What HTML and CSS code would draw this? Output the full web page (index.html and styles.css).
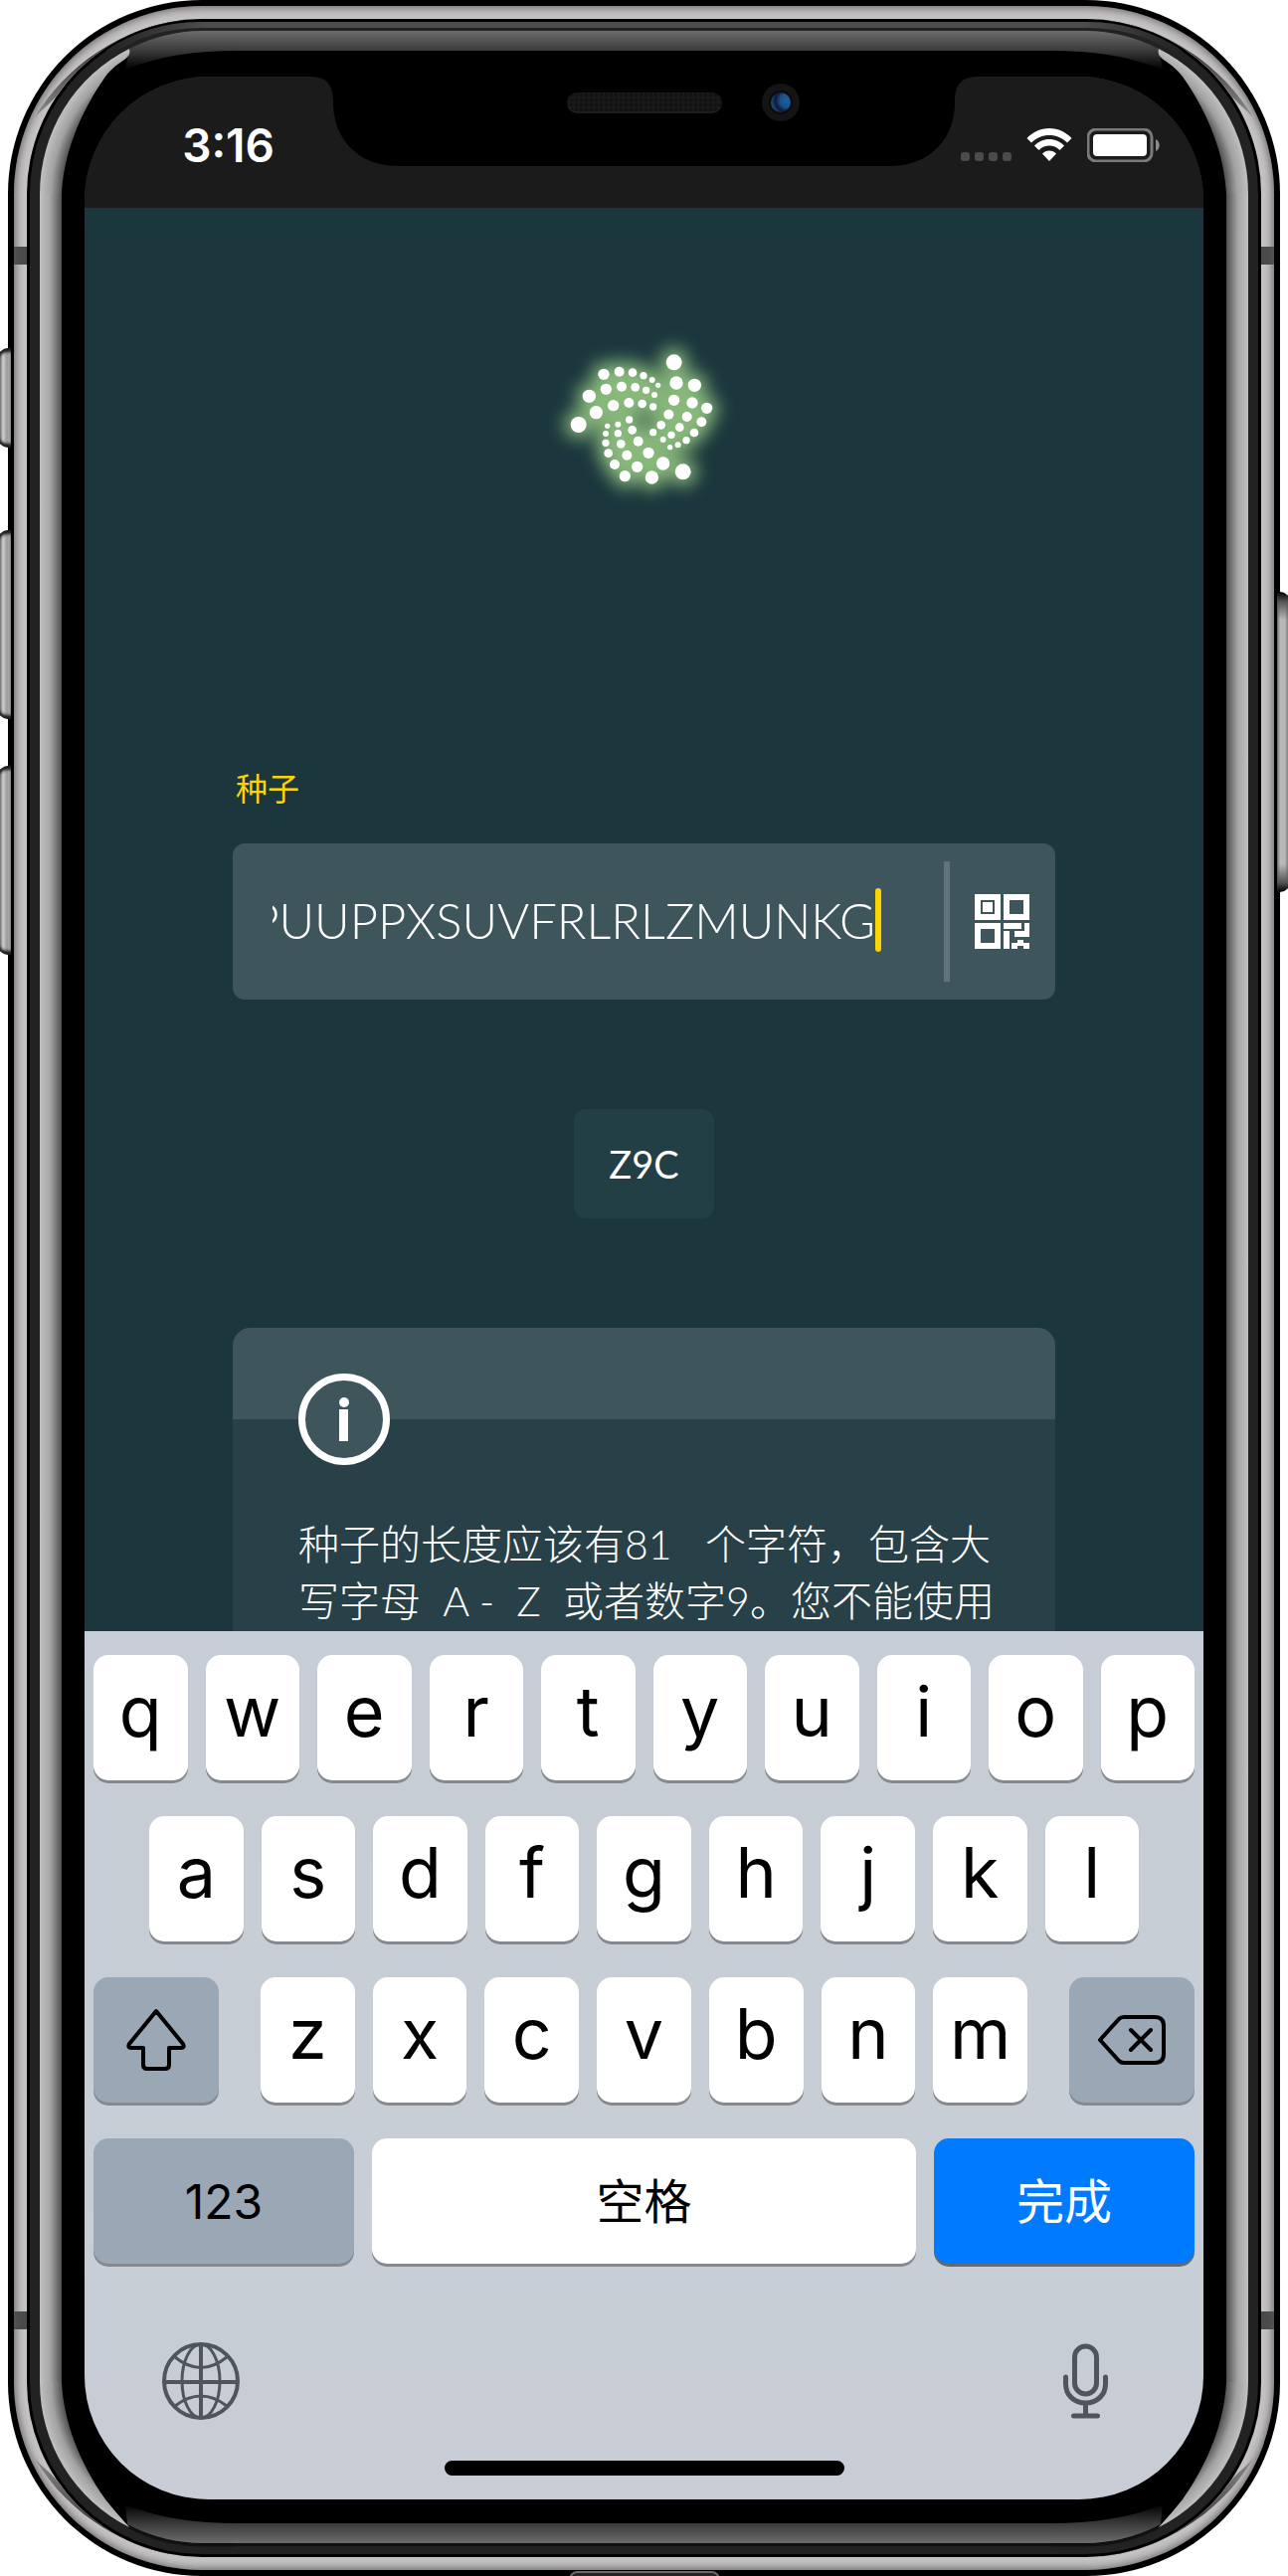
FILE: index.html
```
<!DOCTYPE html>
<html lang="zh-CN">
<head>
<meta charset="utf-8">
<meta name="viewport" content="width=device-width, initial-scale=1">
<title>种子</title>
<link rel="stylesheet" href="styles.css">
</head>
<body>
<svg class="defs" aria-hidden="true">
  <defs>
    <radialGradient id="side-shine" gradientUnits="userSpaceOnUse" cx="195" cy="195" r="163">
      <stop offset="0.86" stop-color="#505050"/>
      <stop offset="0.93" stop-color="#a2a2a2"/>
      <stop offset="1" stop-color="#c0c0c0"/>
    </radialGradient>
    <linearGradient id="side-fade" gradientUnits="userSpaceOnUse" x1="32" y1="0" x2="54" y2="0">
      <stop offset="0" stop-color="#c0c0c0"/>
      <stop offset="0.45" stop-color="#a8a8a8"/>
      <stop offset="1" stop-color="#505050"/>
    </linearGradient>
    <linearGradient id="top-fade" gradientUnits="userSpaceOnUse" x1="0" y1="31" x2="0" y2="70">
      <stop offset="0" stop-color="#6c6c6c"/>
      <stop offset="0.51" stop-color="#3a3a3a"/>
      <stop offset="1" stop-color="#000"/>
    </linearGradient>
    <linearGradient id="bottom-fade" gradientUnits="userSpaceOnUse" x1="0" y1="33" x2="0" y2="72">
      <stop offset="0" stop-color="#6c6c6c"/>
      <stop offset="0.51" stop-color="#3a3a3a"/>
      <stop offset="1" stop-color="#000"/>
    </linearGradient>
    <linearGradient id="lip-fade" gradientUnits="userSpaceOnUse" x1="100" y1="0" x2="200" y2="0">
      <stop offset="0" stop-color="#222"/>
      <stop offset="1" stop-color="#4d4d4d"/>
    </linearGradient>
    <linearGradient id="crescent" gradientUnits="userSpaceOnUse" x1="27" y1="118" x2="170" y2="20">
      <stop offset="0" stop-color="#8a8888"/>
      <stop offset="0.5" stop-color="#3c3c3c"/>
      <stop offset="1" stop-color="#222"/>
    </linearGradient>
    <symbol id="corner" viewBox="0 0 230 230">
      <path d="M180 20C114 27 58 66 27 118C36 108 44 103 50 95A176 176 0 0 1 180 20Z" fill="url(#crescent)"/>
      <path d="M22 230V195A173 173 0 0 1 195 22H230V230Z" fill="#222"/>
      <path d="M32 230V195A163 163 0 0 1 195 32H230V230Z" fill="#000"/>
      <path d="M100 53A171 171 0 0 1 195 25H230" fill="none" stroke="url(#lip-fade)" stroke-width="6"/>
      <path d="M122 49A164 164 0 0 1 195 31H230V51C190 51 152 56 118 70Z" fill="url(#top-fade)"/>
      <path d="M54 230V195C56 155 72 114 98 77C112 59 125 60 122 49A163 163 0 0 0 32 195V230Z" fill="url(#side-shine)"/>
      <path d="M32 195H54V230H32Z" fill="url(#side-fade)"/>
    </symbol>
    <symbol id="corner-low" viewBox="0 0 230 230">
      <path d="M180 20C114 27 58 66 27 118C36 108 44 103 50 95A176 176 0 0 1 180 20Z" fill="url(#crescent)"/>
      <path d="M22 230V195A173 173 0 0 1 195 22H230V230Z" fill="#222"/>
      <path d="M32 230V195A163 163 0 0 1 195 32H230V230Z" fill="#000"/>
      <path d="M122 49A163 163 0 0 1 195 31H230" fill="none" stroke="#111" stroke-width="3"/>
      <path d="M120 52A162 162 0 0 1 195 33H230V53C190 53 152 58 118 72Z" fill="url(#bottom-fade)"/>
      <path d="M54 230V195C56 155 72 114 98 77C110 62 118 54 122 49A163 163 0 0 0 32 195V230Z" fill="url(#side-shine)"/>
      <path d="M32 195H54V230H32Z" fill="url(#side-fade)"/>
    </symbol>
    <filter id="glow" x="-30%" y="-30%" width="160%" height="160%">
      <feGaussianBlur stdDeviation="25"/>
    </filter>
    <g id="dots">
      <circle cx="199" cy="139" r="17"/><circle cx="246" cy="131" r="15"/><circle cx="286" cy="134" r="13"/><circle cx="319" cy="143" r="11"/><circle cx="345" cy="156" r="9"/><circle cx="363" cy="172" r="8"/>
      <circle cx="155" cy="205" r="20"/><circle cx="206" cy="184" r="17"/><circle cx="253" cy="176" r="15"/><circle cx="294" cy="178" r="13"/><circle cx="327" cy="187" r="11"/><circle cx="352" cy="201" r="9"/>
      <circle cx="123" cy="291" r="24"/><circle cx="176" cy="254" r="20"/><circle cx="228" cy="233" r="17"/><circle cx="275" cy="225" r="15"/><circle cx="315" cy="228" r="13"/><circle cx="348" cy="237" r="11"/>
      <circle cx="411" cy="103" r="24"/><circle cx="418" cy="165" r="20"/><circle cx="473" cy="172" r="20"/><circle cx="411" cy="217" r="17"/><circle cx="466" cy="225" r="17"/><circle cx="510" cy="241" r="17"/>
      <circle cx="395" cy="260" r="15"/><circle cx="450" cy="267" r="15"/><circle cx="494" cy="283" r="15"/><circle cx="372" cy="292" r="13"/><circle cx="428" cy="299" r="13"/><circle cx="472" cy="315" r="13"/>
      <circle cx="348" cy="314" r="11"/><circle cx="403" cy="322" r="11"/><circle cx="448" cy="338" r="11"/><circle cx="378" cy="336" r="9"/><circle cx="423" cy="352" r="9"/><circle cx="399" cy="359" r="8"/>
      <circle cx="276" cy="276" r="11"/><circle cx="242" cy="290" r="9"/><circle cx="210" cy="295" r="8"/><circle cx="285" cy="307" r="13"/><circle cx="242" cy="317" r="11"/><circle cx="205" cy="318" r="9"/>
      <circle cx="303" cy="341" r="15"/><circle cx="251" cy="349" r="13"/><circle cx="205" cy="346" r="11"/><circle cx="334" cy="376" r="17"/><circle cx="269" cy="383" r="15"/><circle cx="213" cy="377" r="13"/>
      <circle cx="378" cy="408" r="20"/><circle cx="300" cy="418" r="17"/><circle cx="232" cy="411" r="15"/><circle cx="438" cy="433" r="24"/><circle cx="344" cy="450" r="20"/><circle cx="263" cy="446" r="17"/>
    </g>
  </defs>
</svg>

<div class="device">
  <span class="side-button mute"></span>
  <span class="side-button volume-up"></span>
  <span class="side-button volume-down"></span>
  <span class="side-button power"></span>
  <div class="shell">
    <div class="rim">
      <div class="gap">
        <div class="bezel">
          <svg class="corner top-left" aria-hidden="true"><use href="#corner"/></svg>
          <svg class="corner top-right" aria-hidden="true"><use href="#corner"/></svg>
          <svg class="corner bottom-left" aria-hidden="true"><use href="#corner-low"/></svg>
          <svg class="corner bottom-right" aria-hidden="true"><use href="#corner-low"/></svg>
          <div class="screen">
            <header class="status">
              <time class="clock">3:16</time>
              <svg class="notch" viewBox="0 0 673 90" aria-hidden="true">
                <defs>
                  <pattern id="mesh" width="5" height="5" patternUnits="userSpaceOnUse">
                    <rect width="5" height="5" fill="#121212"/><path d="M0 1H5M1 0V5" stroke="#1e1e1e"/>
                  </pattern>
                  <radialGradient id="lens" cx="0.8" cy="0.4" r="0.95">
                    <stop offset="0" stop-color="#1f5f9e"/><stop offset="0.35" stop-color="#1a5088"/>
                    <stop offset="0.6" stop-color="#0c1a35"/><stop offset="1" stop-color="#3673a8"/>
                  </radialGradient>
                </defs>
                <path d="M0 0C17 0 24 7 24 26C24 62 48 90 90 90H583C625 90 649 62 649 26C649 7 656 0 673 0Z"/>
                <rect x="259" y="16" width="156" height="21" rx="10" fill="url(#mesh)"/>
                <path d="M261 31Q264 36 270 36H404Q410 36 413 31" fill="none" stroke="#222"/>
                <circle cx="474" cy="26" r="19" fill="#141414"/>
                <circle cx="474" cy="26" r="12" fill="#0a0a0c"/>
                <circle cx="474" cy="26" r="10" fill="url(#lens)"/>
              </svg>
              <div class="indicators">
                <svg width="51" height="34" viewBox="0 0 51 34" aria-hidden="true">
                  <g fill="#4b4b4b"><rect y="24" width="9" height="9" rx="3"/><rect x="14" y="24" width="9" height="9" rx="3"/><rect x="28" y="24" width="9" height="9" rx="3"/><rect x="42" y="24" width="9" height="9" rx="3"/></g>
                </svg>
                <svg width="46" height="34" viewBox="0 0 46 34" aria-hidden="true">
                  <g fill="#fff"><path d="M23 0C32 0 40 4 45.500 10L41 14.500C36 9.500 30 7 23 7S10 9.500 5 14.500L0.500 10C6 4 14 0 23 0Z"/><path d="M23 11C29 11 34 13.500 38 17.500L33.500 22C30.500 19 27 17.600 23 17.600S15.500 19 12.500 22L8 17.500C12 13.500 17 11 23 11Z"/><path d="M23 22.500C26 22.500 28 23.500 30 25.500L23 33L16 25.500C18 23.500 20 22.500 23 22.500Z"/></g>
                </svg>
                <svg width="73" height="34" viewBox="0 0 73 34" aria-hidden="true">
                  <rect x="1" y="1" width="64" height="32" rx="8" fill="none" stroke="#7a7a7a" stroke-width="3"/><rect x="6" y="6" width="54" height="22" rx="4" fill="#fff"/><path d="M69 11C74 13 74 21 69 23Z" fill="#8a8a8a"/>
                </svg>
              </div>
            </header>

            <main class="app">
              <svg class="logo" viewBox="7 0 630 540" role="img" aria-label="IOTA">
                <g filter="url(#glow)" opacity="0.95"><use href="#dots" fill="#8fc07f" stroke="#8fc07f" stroke-width="36"/></g>
                <use href="#dots" fill="#fff"/>
              </svg>
              <label class="label" for="seed">种子</label>
              <div class="field">
                <div class="value">
                  <input class="seed" id="seed" type="text" dir="rtl" value="PUUPPXSUVFRLRLZMUNKG">
                  <span class="caret"></span>
                </div>
                <button class="scan" type="button" aria-label="QR">
                  <svg width="55" height="55" viewBox="0 0 55 55" fill="#fff" aria-hidden="true">
                    <path fill-rule="evenodd" d="M0 0H26V26H0ZM6 6V20H20V6Z"/><rect x="8" y="8" width="10" height="10"/>
                    <path fill-rule="evenodd" d="M29 0H55V26H29ZM35 6V20H49V6Z"/>
                    <path fill-rule="evenodd" d="M0 29H26V55H0ZM6 35V49H20V35Z"/>
                    <path d="M29 29H47V35H29ZM50 29H55V43H40V37H50ZM29 37H35V55H29ZM37 49H43V46H49V49H55V55H49V52H43V55H37Z"/>
                  </svg>
                </button>
              </div>
              <output class="checksum" for="seed">Z9C</output>
              <section class="card">
                <div class="card-head">
                  <svg class="info" width="92" height="92" viewBox="0 0 92 92" aria-hidden="true">
                    <circle cx="46" cy="46" r="42.500" fill="#3d555b" stroke="#fff" stroke-width="7"/><circle cx="46" cy="29" r="5" fill="#fff"/><path d="M41 36H50V68H41Z" fill="#fff"/>
                  </svg>
                </div>
                <p class="card-text">种子的长度应该有81&nbsp;&nbsp; 个字符，包含大<br>写字母&nbsp; A - &nbsp;Z&nbsp; 或者数字9。您不能使用</p>
              </section>
            </main>

            <section class="keyboard">
              <div class="row">
                <button class="key">q</button><button class="key">w</button><button class="key">e</button><button class="key">r</button><button class="key">t</button><button class="key">y</button><button class="key">u</button><button class="key">i</button><button class="key">o</button><button class="key">p</button>
              </div>
              <div class="row inset">
                <button class="key">a</button><button class="key">s</button><button class="key">d</button><button class="key">f</button><button class="key">g</button><button class="key">h</button><button class="key">j</button><button class="key">k</button><button class="key">l</button>
              </div>
              <div class="row spread">
                <button class="key dark modifier" aria-label="Shift">
                  <svg width="60" height="64" viewBox="0 0 60 64" fill="none" stroke="#000" stroke-width="4" stroke-linejoin="round" aria-hidden="true"><path d="M30 3L57 36Q59 40 55 40H43V57Q43 61 39 61H21Q17 61 17 57V40H5Q1 40 3 36Z"/></svg>
                </button>
                <div class="letters">
                  <button class="key">z</button><button class="key">x</button><button class="key">c</button><button class="key">v</button><button class="key">b</button><button class="key">n</button><button class="key">m</button>
                </div>
                <button class="key dark modifier" aria-label="Delete">
                  <svg width="70" height="52" viewBox="0 0 70 52" fill="none" stroke="#000" stroke-width="4" stroke-linejoin="round" stroke-linecap="round" aria-hidden="true"><path d="M3 26L22 5Q24 3 27 3H58Q67 3 67 12V40Q67 49 58 49H27Q24 49 22 47ZM34 16L54 36M54 16L34 36"/></svg>
                </button>
              </div>
              <div class="row">
                <button class="key dark wide">123</button>
                <button class="key space">空格</button>
                <button class="key done wide">完成</button>
              </div>
              <div class="tools">
                <button class="tool" aria-label="Globe">
                  <svg width="78" height="78" viewBox="0 0 78 78" fill="none" stroke="#50555d" stroke-width="3" aria-hidden="true"><circle cx="39" cy="39" r="37" stroke-width="4"/><path d="M39 2V76M2 40H76" stroke-width="4"/><ellipse cx="39" cy="39" rx="19" ry="37"/><path d="M13 15Q39 36 65 15M13 64Q39 44 65 64"/></svg>
                </button>
                <button class="tool" aria-label="Mic">
                  <svg width="45" height="76" viewBox="0 0 45 76" fill="none" stroke="#50555d" stroke-width="5" stroke-linecap="round" aria-hidden="true"><rect x="11.500" y="3" width="22" height="48" rx="11"/><path d="M2.500 34V41C2.500 52 11 60 22.500 60S42.500 52 42.500 41V34M22.500 60V73M10.500 73H34.500"/></svg>
                </button>
              </div>
              <div class="home-bar"></div>
            </section>
          </div>
        </div>
      </div>
    </div>
  </div>
  <span class="port"></span>
</div>
</body>
</html>
```
FILE: styles.css
```
* { box-sizing: border-box; }
body { margin: 0; background: #fff; overflow-x: hidden; }
button { border: 0; padding: 0; margin: 0; background: none; font: inherit; color: inherit; }
svg { display: block; flex: none; }
.defs { position: absolute; width: 0; height: 0; }

/* Phone body */
.device { position: relative; padding: 0 8px; overflow: hidden; }
.shell { padding: 6px; border-radius: 195px; background: #000; }
.rim {
  padding: 13px;
  border-radius: 189px;
  background:
    linear-gradient(#4a4a4a, #4a4a4a) 0 242px / 100% 18px no-repeat,
    linear-gradient(#4a4a4a, #4a4a4a) 0 calc(100% - 242px) / 100% 18px no-repeat,
    #c6c3c4;
  box-shadow: inset 0 0 10px 1px #5c5959;
}
.gap { padding: 3px; border-radius: 176px; background: #000; }
.bezel {
  position: relative;
  padding: 55px;
  border-radius: 173px;
  background:
    linear-gradient(to right, #222 0 10px, #c0c0c0 10px, #a8a8a8 20px, #505050 32px) 0 173px / 32px calc(100% - 346px) no-repeat,
    linear-gradient(to left, #222 0 10px, #c0c0c0 10px, #a8a8a8 20px, #505050 32px) 100% 173px / 32px calc(100% - 346px) no-repeat,
    linear-gradient(to bottom, #4d4d4d 0 6px, #222 6px 9px, #6c6c6c 9px, #3a3a3a 29px) 173px 0 / calc(100% - 346px) 29px no-repeat,
    linear-gradient(to top, #222 0 8px, #111 8px 11px, #6c6c6c 11px, #3a3a3a 31px) 173px 100% / calc(100% - 346px) 31px no-repeat,
    #000;
}
.corner { position: absolute; width: 230px; height: 230px; }
.top-left { top: -22px; left: -22px; }
.top-right { top: -22px; right: -22px; transform: scaleX(-1); }
.bottom-left { bottom: -22px; left: -22px; transform: scaleY(-1); }
.bottom-right { bottom: -22px; right: -22px; transform: scale(-1, -1); }

.side-button {
  position: absolute;
  left: -2px;
  z-index: 1;
  width: 13px;
  border-radius: 10px 0 0 10px;
  background: linear-gradient(to right, #444, #8a8a8a 3px, #d0d0d0 5px, #9a9a9a 9px, #b5b5b5);
  box-shadow: inset 0 5px 3px -1px #1c1c1c, inset 0 -5px 3px -1px #1c1c1c;
}
.mute { top: 350px; height: 100px; }
.volume-up { top: 533px; height: 190px; }
.volume-down { top: 770px; height: 190px; }
.power {
  left: auto;
  right: -2px;
  top: 595px;
  height: 302px;
  border-radius: 0 10px 10px 0;
  background: linear-gradient(#000, #555 10px, transparent 28px, transparent calc(100% - 28px), #555 calc(100% - 10px), #000), linear-gradient(to right, #666, #b8b8b8 3px, #b8b8b8 8px, #555);
  box-shadow: none;
}
.port {
  position: absolute;
  left: 50%;
  bottom: -12px;
  width: 152px;
  height: 17px;
  margin-left: -76px;
  border: 2px solid #6a6a6a;
  border-radius: 12px;
  background: #222;
}

/* Screen */
.screen { position: relative; border-radius: 125px; overflow: hidden; background: #1b373d; }

.status { display: grid; grid-template-columns: minmax(0, 1fr) 673px minmax(0, 1fr); height: 132px; background: #1b1b1b; }
.clock {
  justify-self: end;
  padding: 41px 35px 0 0;
  font: 600 46px/56px Inter, "Liberation Sans", sans-serif;
  color: #fff;
}
.notch { width: 673px; height: 90px; }
.indicators { display: flex; justify-content: flex-end; gap: 15px; padding: 52px 44px 0 0; }

.app { display: flex; flex-direction: column; padding: 121px 149px 0; font-family: Lato, "Noto Sans CJK SC", sans-serif; color: #fff; }
.logo { align-self: center; width: 210px; height: 180px; overflow: visible; }
.label { margin: 263px 0 35px 3px; font-size: 32px; line-height: 40px; font-weight: 400; color: #fbd503; }

.field { display: flex; align-items: stretch; height: 157px; border-radius: 12px; background: #3d555b; }
.value { flex: 1; display: flex; align-items: center; min-width: 0; padding: 0 0 4px 40px; }
.seed {
  flex: 1;
  min-width: 0;
  height: 64px;
  padding: 0;
  border: 0;
  outline: 0;
  background: none;
  color: #fff;
  font: 300 49px/64px Lato, sans-serif;
}
.caret { width: 6px; height: 64px; margin-right: 63px; border-radius: 3px; background: #fbd503; }
.scan { display: flex; align-items: center; padding: 0 26px 0 25px; margin: 18px 0; border-left: 6px solid #60757b; }

.checksum {
  align-self: center;
  min-width: 141px;
  height: 110px;
  margin: 110px 0;
  border-radius: 12px;
  background: #233f46;
  font-size: 38px;
  line-height: 110px;
  text-align: center;
}

.card { border-radius: 18px 18px 0 0; overflow: hidden; background: #284047; }
.card-head { height: 92px; padding: 46px 66px 0; background: #3d555b; }
.info { position: relative; }
.card-text { margin: 0; padding: 97px 66px 2px; font-size: 41px; line-height: 57px; font-weight: 300; white-space: nowrap; }

/* Keyboard */
.keyboard {
  display: flex;
  flex-direction: column;
  gap: 36px;
  padding: 24px 9px;
  background: linear-gradient(#c7cdd6, #c7ced5 70%, #c9ccd5);
  font-family: Inter, "Noto Sans CJK SC", sans-serif;
  color: #000;
}
.row { display: flex; gap: 18px; }
.inset { padding: 0 56px; }
.spread { gap: 42px; }
.letters { flex: 1; display: flex; gap: 18px; }
.key {
  flex: 1;
  display: flex;
  justify-content: center;
  min-width: 0;
  height: 126px;
  border-radius: 15px;
  background: #fff;
  box-shadow: 0 3px 0 #85898e;
  font-size: 70px;
  line-height: 114px;
  font-weight: 400;
}
.dark { background: #9aa7b4; }
.modifier { flex: none; width: 126px; align-items: center; }
.wide, .space { font-size: 48px; line-height: 128px; }
.wide { flex: none; width: 262px; }
.done { background: #007aff; color: #fff; box-shadow: 0 3px 0 #66696c; }
.tools { display: flex; justify-content: space-between; align-items: center; padding: 43px 87px 0 69px; }
.home-bar { align-self: center; width: 402px; height: 15px; margin-top: 5px; border-radius: 8px; background: #000; }
```
